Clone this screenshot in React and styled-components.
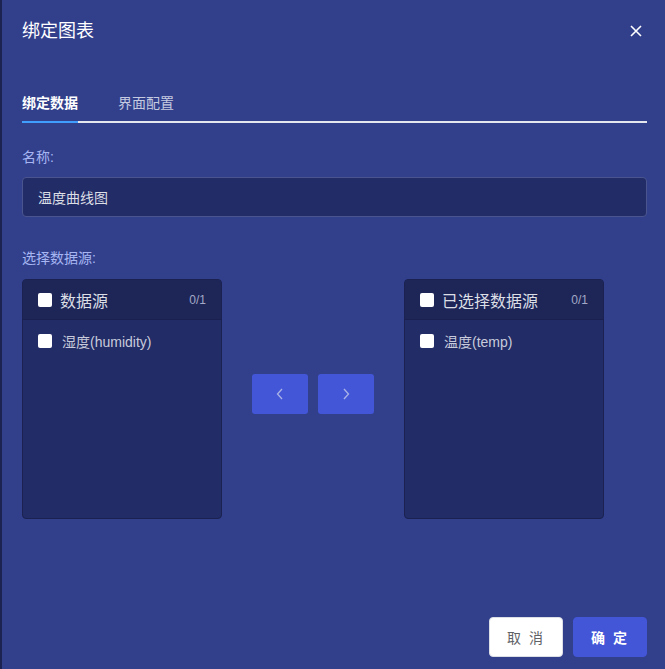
import React, { useState } from "react";
import styled, { createGlobalStyle } from "styled-components";

const GlobalStyle = createGlobalStyle`
  html, body {
    margin: 0;
    padding: 0;
    height: 100%;
    background: #1d2350;
  }
  #root {
    height: 100%;
  }
  * {
    box-sizing: border-box;
  }
`;

const FONT = `"Liberation Sans", "Noto Sans CJK SC", sans-serif`;

const sources = [{ id: "humidity", label: "湿度(humidity)" }];
const selected = [{ id: "temp", label: "温度(temp)" }];

export default function App() {
  const [tab, setTab] = useState(0);
  const [name, setName] = useState("温度曲线图");

  return (
    <>
      <GlobalStyle />
      <Dialog>
        <Header>
          <Title>绑定图表</Title>
          <CloseBtn aria-label="close">
            <svg width="12" height="12" viewBox="0 0 12 12">
              <path d="M1 1 L11 11 M11 1 L1 11" stroke="#fff" strokeWidth="1.6" />
            </svg>
          </CloseBtn>
        </Header>

        <Body>
          <Tabs>
            {["绑定数据", "界面配置"].map((t, i) => (
              <Tab key={t} active={tab === i} onClick={() => setTab(i)}>
                {t}
              </Tab>
            ))}
          </Tabs>

          <Label>名称:</Label>
          <NameInput value={name} onChange={(e) => setName(e.target.value)} />

          <Label top="31px">选择数据源:</Label>

          <Transfer>
            <Panel title="数据源" items={sources} />
            <Actions>
              <ArrowBtn>
                <svg width="8" height="12" viewBox="0 0 8 12">
                  <polyline points="6,1 1.5,6 6,11" fill="none" stroke="#aab3e6" strokeWidth="1.3" />
                </svg>
              </ArrowBtn>
              <ArrowBtn>
                <svg width="8" height="12" viewBox="0 0 8 12">
                  <polyline points="2,1 6.5,6 2,11" fill="none" stroke="#aab3e6" strokeWidth="1.3" />
                </svg>
              </ArrowBtn>
            </Actions>
            <Panel title="已选择数据源" items={selected} />
          </Transfer>
        </Body>

        <Footer>
          <FooterBtn>取 消</FooterBtn>
          <FooterBtn primary>确 定</FooterBtn>
        </Footer>
      </Dialog>
    </>
  );
}

function Panel({ title, items }) {
  return (
    <PanelBox>
      <PanelHead>
        <Check />
        <PanelTitle>{title}</PanelTitle>
        <Count>0/{items.length}</Count>
      </PanelHead>
      <PanelList>
        {items.map((it) => (
          <Item key={it.id}>
            <Check />
            <span>{it.label}</span>
          </Item>
        ))}
      </PanelList>
    </PanelBox>
  );
}

const Dialog = styled.div`
  margin-left: 2px;
  height: 669px;
  background: #32408c;
  font-family: ${FONT};
  display: flex;
  flex-direction: column;
`;

const Header = styled.div`
  padding: 19px 20px 0 20px;
  display: flex;
  align-items: center;
  justify-content: space-between;
`;

const Title = styled.div`
  font-size: 18px;
  line-height: 24px;
  color: #fff;
`;

const CloseBtn = styled.button`
  border: 0;
  background: none;
  padding: 0;
  width: 12px;
  height: 12px;
  display: flex;
  margin-right: 3px;
  cursor: pointer;
`;

const Body = styled.div`
  padding: 49px 18px 0 20px;
  display: flex;
  flex-direction: column;
`;

const Tabs = styled.div`
  display: flex;
  gap: 40px;
  border-bottom: 2px solid #e4e7ed;
`;

const Tab = styled.div`
  font-size: 14px;
  line-height: 22px;
  padding-bottom: 7px;
  margin-bottom: -2px;
  cursor: pointer;
  color: ${(p) => (p.active ? "#fff" : "#c5cae0")};
  font-weight: ${(p) => (p.active ? "bold" : "normal")};
  border-bottom: 2px solid ${(p) => (p.active ? "#409eff" : "transparent")};
`;

const Label = styled.div`
  margin-top: ${(p) => p.top || "24px"};
  font-size: 14px;
  line-height: 20px;
  color: #a7b6f2;
`;

const NameInput = styled.input`
  margin-top: 10px;
  height: 40px;
  width: 100%;
  background: #222c66;
  border: 1px solid #4a5590;
  border-radius: 4px;
  padding: 0 15px;
  font-family: ${FONT};
  font-size: 14px;
  color: #dcdfe6;
  outline: none;
`;

const Transfer = styled.div`
  margin-top: 11px;
  display: flex;
  align-items: flex-start;
`;

const PanelBox = styled.div`
  width: 200px;
  height: 240px;
  background: #222c66;
  border: 1px solid #1b2251;
  border-radius: 4px;
  overflow: hidden;
`;

const PanelHead = styled.div`
  height: 40px;
  background: #1e2658;
  border-bottom: 1px solid #1a2150;
  display: flex;
  align-items: center;
  padding: 0 15px;
`;

const PanelTitle = styled.span`
  margin-left: 8px;
  font-size: 16px;
  color: #dcdfe6;
  flex: 1;
`;

const Count = styled.span`
  font-size: 12px;
  color: #a3a9c6;
`;

const Check = styled.span`
  width: 14px;
  height: 14px;
  border-radius: 2px;
  background: #fff;
  flex-shrink: 0;
`;

const PanelList = styled.div`
  padding-top: 6px;
`;

const Item = styled.div`
  height: 30px;
  display: flex;
  align-items: center;
  padding: 0 15px;
  font-size: 14px;
  color: #c8cbdc;

  span:last-child {
    margin-left: 10px;
  }
`;

const Actions = styled.div`
  margin: 95px 30px 0;
  display: flex;
  gap: 10px;
`;

const ArrowBtn = styled.button`
  width: 56px;
  height: 40px;
  border: 0;
  border-radius: 3px;
  background: #4356d8;
  display: flex;
  align-items: center;
  justify-content: center;
  cursor: pointer;
`;

const Footer = styled.div`
  margin-top: auto;
  padding: 0 18px 12px 0;
  display: flex;
  justify-content: flex-end;
  gap: 10px;
`;

const FooterBtn = styled.button`
  width: 74px;
  height: 40px;
  border-radius: 4px;
  border: 1px solid ${(p) => (p.primary ? "#4356d8" : "#dcdfe6")};
  background: ${(p) => (p.primary ? "#4356d8" : "#fff")};
  color: ${(p) => (p.primary ? "#fff" : "#606266")};
  font-family: ${FONT};
  font-size: 14px;
  font-weight: ${(p) => (p.primary ? "bold" : "normal")};
  letter-spacing: 2px;
  cursor: pointer;
`;
